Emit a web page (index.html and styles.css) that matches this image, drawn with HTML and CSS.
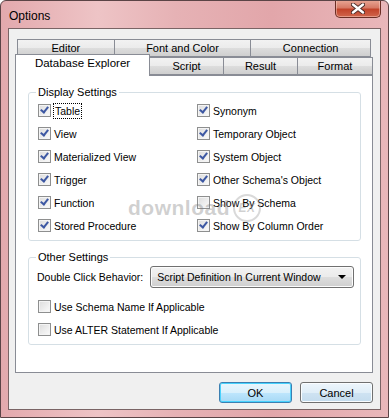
FILE: index.html
```html
<!DOCTYPE html>
<html lang="en">

<head>
    <meta charset="UTF-8">
    <title>Options</title>
    <link rel="stylesheet" href="styles.css">
</head>

<body>
    <div class="window">
        <div class="titlebar">
            <span class="title">Options</span>
            <button class="close" aria-label="Close">
                <svg width="14" height="11" viewBox="0 0 14 11">
                    <path d="M2 1.5 L12 9.5 M12 1.5 L2 9.5" stroke="#4a2a26" stroke-width="4.2" stroke-linecap="round" />
                    <path d="M2 1.5 L12 9.5 M12 1.5 L2 9.5" stroke="#ffffff" stroke-width="2.4" stroke-linecap="round" />
                </svg>
            </button>
        </div>

        <div class="client">
            <div class="tabs">
                <div class="tab-row back">
                    <div class="tab t-editor">Editor</div>
                    <div class="tab t-font">Font and Color</div>
                    <div class="tab t-conn">Connection</div>
                </div>
                <div class="tab-row front">
                    <div class="tab t-db active">Database Explorer</div>
                    <div class="tab t-script">Script</div>
                    <div class="tab t-result">Result</div>
                    <div class="tab t-format">Format</div>
                </div>
            </div>

            <div class="tab-panel">
                <fieldset class="group display">
                    <legend>Display Settings</legend>
                    <div class="check-grid">
                        <label class="check"><span class="box checked"></span><span class="text focused">Table</span></label>
                        <label class="check"><span class="box checked"></span><span class="text">Synonym</span></label>
                        <label class="check"><span class="box checked"></span><span class="text">View</span></label>
                        <label class="check"><span class="box checked"></span><span class="text">Temporary Object</span></label>
                        <label class="check"><span class="box checked"></span><span class="text">Materialized View</span></label>
                        <label class="check"><span class="box checked"></span><span class="text">System Object</span></label>
                        <label class="check"><span class="box checked"></span><span class="text">Trigger</span></label>
                        <label class="check"><span class="box checked"></span><span class="text">Other Schema's Object</span></label>
                        <label class="check"><span class="box checked"></span><span class="text">Function</span></label>
                        <label class="check"><span class="box"></span><span class="text">Show By Schema</span></label>
                        <label class="check"><span class="box checked"></span><span class="text">Stored Procedure</span></label>
                        <label class="check"><span class="box checked"></span><span class="text">Show By Column Order</span></label>
                    </div>
                </fieldset>

                <fieldset class="group other">
                    <legend>Other Settings</legend>
                    <div class="combo-row">
                        <span class="combo-label">Double Click Behavior:</span>
                        <div class="combo">
                            <span>Script Definition In Current Window</span>
                            <span class="arrow"></span>
                        </div>
                    </div>
                    <label class="check"><span class="box"></span><span class="text">Use Schema Name If Applicable</span></label>
                    <label class="check"><span class="box"></span><span class="text">Use ALTER Statement If Applicable</span></label>
                </fieldset>
            </div>

            <div class="buttons">
                <button class="btn default">OK</button>
                <button class="btn">Cancel</button>
            </div>
        </div>

        <div class="watermark">download<span class="ex">EX</span></div>
    </div>
</body>

</html>
```

FILE: styles.css
```css
:root {
    --tab-border: #898c95;
    --group-border: #d5dfe5;
    --font-ui: "Liberation Sans", Arial, sans-serif;
}

body {
    margin: 0;
    font-family: var(--font-ui);
    font-size: 10.5px;
    color: #000;
}

.window {
    position: relative;
    width: 389px;
    height: 418px;
    box-sizing: border-box;
    padding: 0 7px 8px 7px;
    border: 1px solid #5b4446;
    border-radius: 6px 6px 0 0;
    background: linear-gradient(to right, #e3a9ad 0%, #eec4c6 25%, #e6b2b5 45%, #e2a6aa 70%, #e9b7ba 100%);
    overflow: hidden;
}

.titlebar {
    height: 27px;
    display: flex;
    justify-content: space-between;
    align-items: flex-start;
}

.title {
    margin: 8px 0 0 1px;
    font-size: 12px;
}

.close {
    width: 46px;
    height: 18px;
    margin: -1px 0 0 0;
    padding: 0;
    border: 1px solid #6b2e25;
    border-top: none;
    border-radius: 0 0 5px 5px;
    background: linear-gradient(#e9a897 0%, #d77a66 45%, #c2432a 55%, #d0664d 100%);
    display: flex;
    justify-content: center;
    align-items: center;
    box-shadow: inset 0 0 0 1px rgba(255, 220, 210, 0.45);
}

.client {
    background: #f0f0f0;
    border: 1px solid #7a6465;
    padding: 10px 7px 6px 6px;
}

/* tabs */

.tab-row {
    display: flex;
}

.tab-row.back {
    margin: 0 2px;
}

.tab-row.front {
    margin-top: -3px;
    align-items: flex-end;
    height: 21px;
}

.tab {
    box-sizing: border-box;
    height: 18px;
    border: 1px solid var(--tab-border);
    margin-left: -1px;
    background: linear-gradient(#f2f2f2 0%, #ebebeb 50%, #dddddd 51%, #cfcfcf 100%);
    text-align: center;
    line-height: 16px;
    font-size: 11px;
}

.tab:first-child {
    margin-left: 0;
}

.t-editor { width: 98px; }
.t-font { width: 138px; }
.t-conn { width: 121px; }
.t-db { width: 135px; }
.t-script { width: 75px; }
.t-result { width: 75px; }
.t-format { width: 76px; }

.tab.active {
    position: relative;
    z-index: 1;
    height: 22px;
    margin-bottom: -1px;
    border-bottom: none;
    background: #fff;
    line-height: 17px;
    font-size: 11.5px;
}

.tab-panel {
    box-sizing: border-box;
    height: 298px;
    background: #fff;
    border: 1px solid var(--tab-border);
    padding: 10px 11px 0 12px;
}

/* group boxes */

.group {
    margin: 0;
    padding: 0 4px 3px 9px;
    border: 1px solid var(--group-border);
    border-radius: 3px;
    min-width: 0;
}

.group legend {
    padding: 0 2px;
    margin-left: -2px;
    line-height: 13px;
    font-size: 11px;
}

.group.other {
    margin-top: 10px;
}

.check-grid {
    display: grid;
    grid-template-columns: 159px 1fr;
}

.check {
    height: 23px;
    display: flex;
    align-items: center;
    gap: 3px;
    white-space: nowrap;
}

.box {
    position: relative;
    width: 13px;
    height: 13px;
    box-sizing: border-box;
    border: 1px solid #8e8f8f;
    background: linear-gradient(135deg, #dcdcdc, #fbfbfb);
    box-shadow: inset 0 0 0 1px #f4f4f4;
    flex: none;
}

.box.checked::after {
    content: "";
    position: absolute;
    left: 3px;
    top: 0px;
    width: 3px;
    height: 6px;
    border-right: 2px solid #3d58a3;
    border-bottom: 2px solid #3d58a3;
    transform: rotate(38deg);
}

.text.focused {
    outline: 1px dotted #000;
    outline-offset: 0;
    padding: 0 1px;
    line-height: 14px;
}

.combo-row {
    display: flex;
    align-items: center;
    gap: 7px;
    margin: 2px 0 7px -1px;
    white-space: nowrap;
}

.combo {
    box-sizing: border-box;
    width: 204px;
    height: 22px;
    flex: none;
    border: 1px solid #707070;
    border-radius: 3px;
    background: linear-gradient(#f2f2f2 0%, #ebebeb 50%, #dddddd 51%, #cfcfcf 100%);
    box-shadow: inset 0 0 0 1px #fcfcfc;
    display: flex;
    align-items: center;
    justify-content: space-between;
    padding: 0 7px 0 6px;
}

.arrow {
    width: 0;
    height: 0;
    border-left: 4px solid transparent;
    border-right: 4px solid transparent;
    border-top: 4px solid #000;
}

/* buttons */

.buttons {
    display: flex;
    justify-content: flex-end;
    gap: 8px;
    margin-top: 9px;
}

.btn {
    width: 73px;
    height: 21px;
    padding: 0;
    font-family: var(--font-ui);
    font-size: 11px;
    color: #000;
    border: 1px solid #707070;
    border-radius: 3px;
    background: linear-gradient(#eef6fc 0%, #e0eef8 50%, #cfe3f2 51%, #c4dcee 100%);
    box-shadow: inset 0 0 0 1px #fafdff;
}

.btn.default {
    border-color: #3c7fb1;
    background: linear-gradient(#eaf6fd 0%, #d9f0fc 50%, #bee6fd 51%, #a7d9f5 100%);
    box-shadow: inset 0 0 0 1px #48d2fd;
}

/* watermark over the content */

.watermark {
    position: absolute;
    left: 127px;
    top: 193px;
    font-size: 21px;
    font-weight: bold;
    color: rgba(120, 120, 120, 0.35);
    letter-spacing: 0.5px;
    display: flex;
    align-items: center;
    pointer-events: none;
}

.watermark .ex {
    margin-left: 3px;
    width: 24px;
    height: 24px;
    border-radius: 50%;
    border: 2px solid rgba(130, 130, 130, 0.3);
    font-size: 12px;
    font-style: italic;
    display: flex;
    align-items: center;
    justify-content: center;
}
```
